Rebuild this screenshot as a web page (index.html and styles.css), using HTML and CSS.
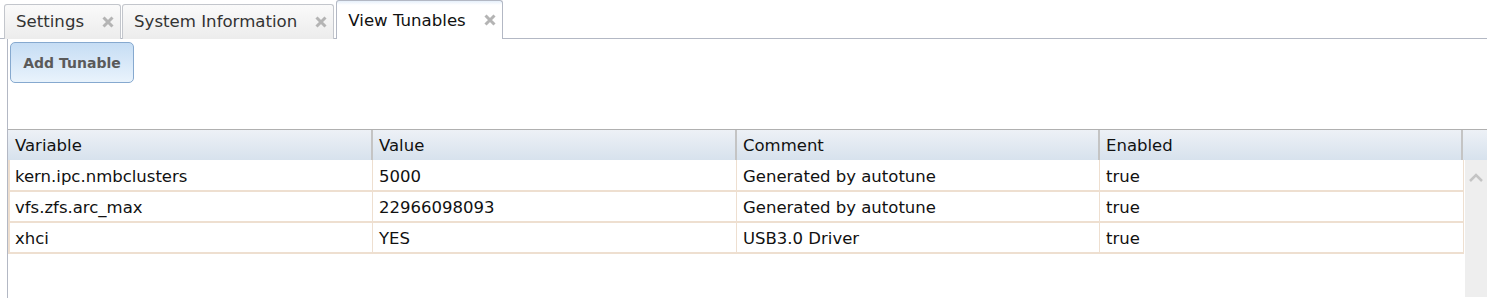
FILE: index.html
```html
<!DOCTYPE html>
<html>
  <head>
    <title>View Tunables</title>
    <meta name="viewport" content="width=device-width, initial-scale=1" />
    <link rel="stylesheet" href="styles.css">
  </head>
  <body>
    <div class="tabs">
      <div class="tab">Settings
        <svg class="close" width="12" height="12" viewBox="0 0 12 12"><path d="M1.5 1.5 L10.5 10.5 M10.5 1.5 L1.5 10.5" stroke="#b4b4b4" stroke-width="3"/></svg>
      </div>
      <div class="tab">System Information
        <svg class="close" width="12" height="12" viewBox="0 0 12 12"><path d="M1.5 1.5 L10.5 10.5 M10.5 1.5 L1.5 10.5" stroke="#b4b4b4" stroke-width="3"/></svg>
      </div>
      <div class="tab active">View Tunables
        <svg class="close" width="12" height="12" viewBox="0 0 12 12"><path d="M1.5 1.5 L10.5 10.5 M10.5 1.5 L1.5 10.5" stroke="#b4b4b4" stroke-width="3"/></svg>
      </div>
    </div>
    <div class="pane">
      <button class="btn">Add Tunable</button>
      <div class="grid">
        <div class="head">
          <div class="hcell">Variable</div>
          <div class="hcell">Value</div>
          <div class="hcell">Comment</div>
          <div class="hcell">Enabled</div>
          <div class="corner"></div>
        </div>
        <div class="body">
          <div class="rows">
            <div class="row"><div>kern.ipc.nmbclusters</div><div>5000</div><div>Generated by autotune</div><div>true</div></div>
            <div class="row"><div>vfs.zfs.arc_max</div><div>22966098093</div><div>Generated by autotune</div><div>true</div></div>
            <div class="row"><div>xhci</div><div>YES</div><div>USB3.0 Driver</div><div>true</div></div>
          </div>
          <div class="scroll">
            <svg width="14" height="9" viewBox="0 0 14 9"><path d="M1 8 L7 2 L13 8" fill="none" stroke="#c4c4c4" stroke-width="2.5"/></svg>
          </div>
        </div>
      </div>
    </div>
  </body>
</html>
```
FILE: styles.css
```css
body {
  margin: 0;
  font-family: "DejaVu Sans", Verdana, sans-serif;
  color: #111;
  background-color: #fff;
  overflow: hidden;
}
/* tab strip */
.tabs {
  display: flex;
  align-items: flex-end;
  height: 38px;
  padding-left: 4px;
  border-bottom: 1px solid #b3b8c4;
}
.tab {
  display: flex;
  align-items: center;
  box-sizing: border-box;
  height: 35px;
  margin-right: 1px;
  margin-bottom: -1px;
  padding: 0 6px 1px 11px;
  gap: 18px;
  font-size: 16.6px;
  color: #333;
  background: linear-gradient(#fafafa, #ececec);
  border: 1px solid #c3c6cc;
  border-bottom: none;
  border-radius: 3px 3px 0 0;
}
.tab.active {
  height: 39px;
  margin-left: 1px;
  padding-bottom: 0;
  color: #111;
  background: linear-gradient(#e6f0fb 0px, #fff 4px);
  border-color: #b3b8c4;
}
/* content pane */
.pane {
  margin-left: 7px;
  height: 260px;
  border-left: 1px solid #b3b8c4;
}
.btn {
  margin: 3px 0 0 2px;
  width: 124px;
  height: 41px;
  padding: 0;
  font-family: "DejaVu Sans", Verdana, sans-serif;
  font-size: 14px;
  font-weight: bold;
  color: #5a5a5a;
  background: linear-gradient(#c6ddf4, #e9f3fc);
  border: 1px solid #86a9cf;
  border-radius: 5px;
}
.grid {
  margin-top: 46px;
  border-top: 1px solid #b0b0b0;
  font-size: 16.5px;
}
.head {
  display: grid;
  grid-template-columns: 365px 364px 363px 363px 1fr;
  height: 30px;
  background: linear-gradient(#edf1f6, #d7e2ed);
}
.hcell {
  display: flex;
  align-items: center;
  padding: 1px 0 0 6px;
  border-right: 2px solid #c4c4c4;
}
.hcell:first-child {
  padding-left: 7px;
}
.body {
  display: flex;
  gap: 1px;
  height: 137px;
}
.rows {
  width: 1454px;
  align-self: flex-start;
  border-left: 2px solid #eedfd0;
}
.row {
  display: grid;
  grid-template-columns: 363px 364px 363px 1fr;
  height: 31px;
  border-bottom: 2px solid #eedfd0;
  box-sizing: border-box;
}
.row:first-child {
  height: 32px;
}
.row div {
  display: flex;
  align-items: center;
  padding: 2px 0 0 6px;
  border-right: 1px solid #eedfd0;
}
.row div:first-child {
  padding-left: 5px;
}
.scroll {
  flex: 1;
  background-color: #eee;
  text-align: center;
  padding-top: 7px;
}
```
